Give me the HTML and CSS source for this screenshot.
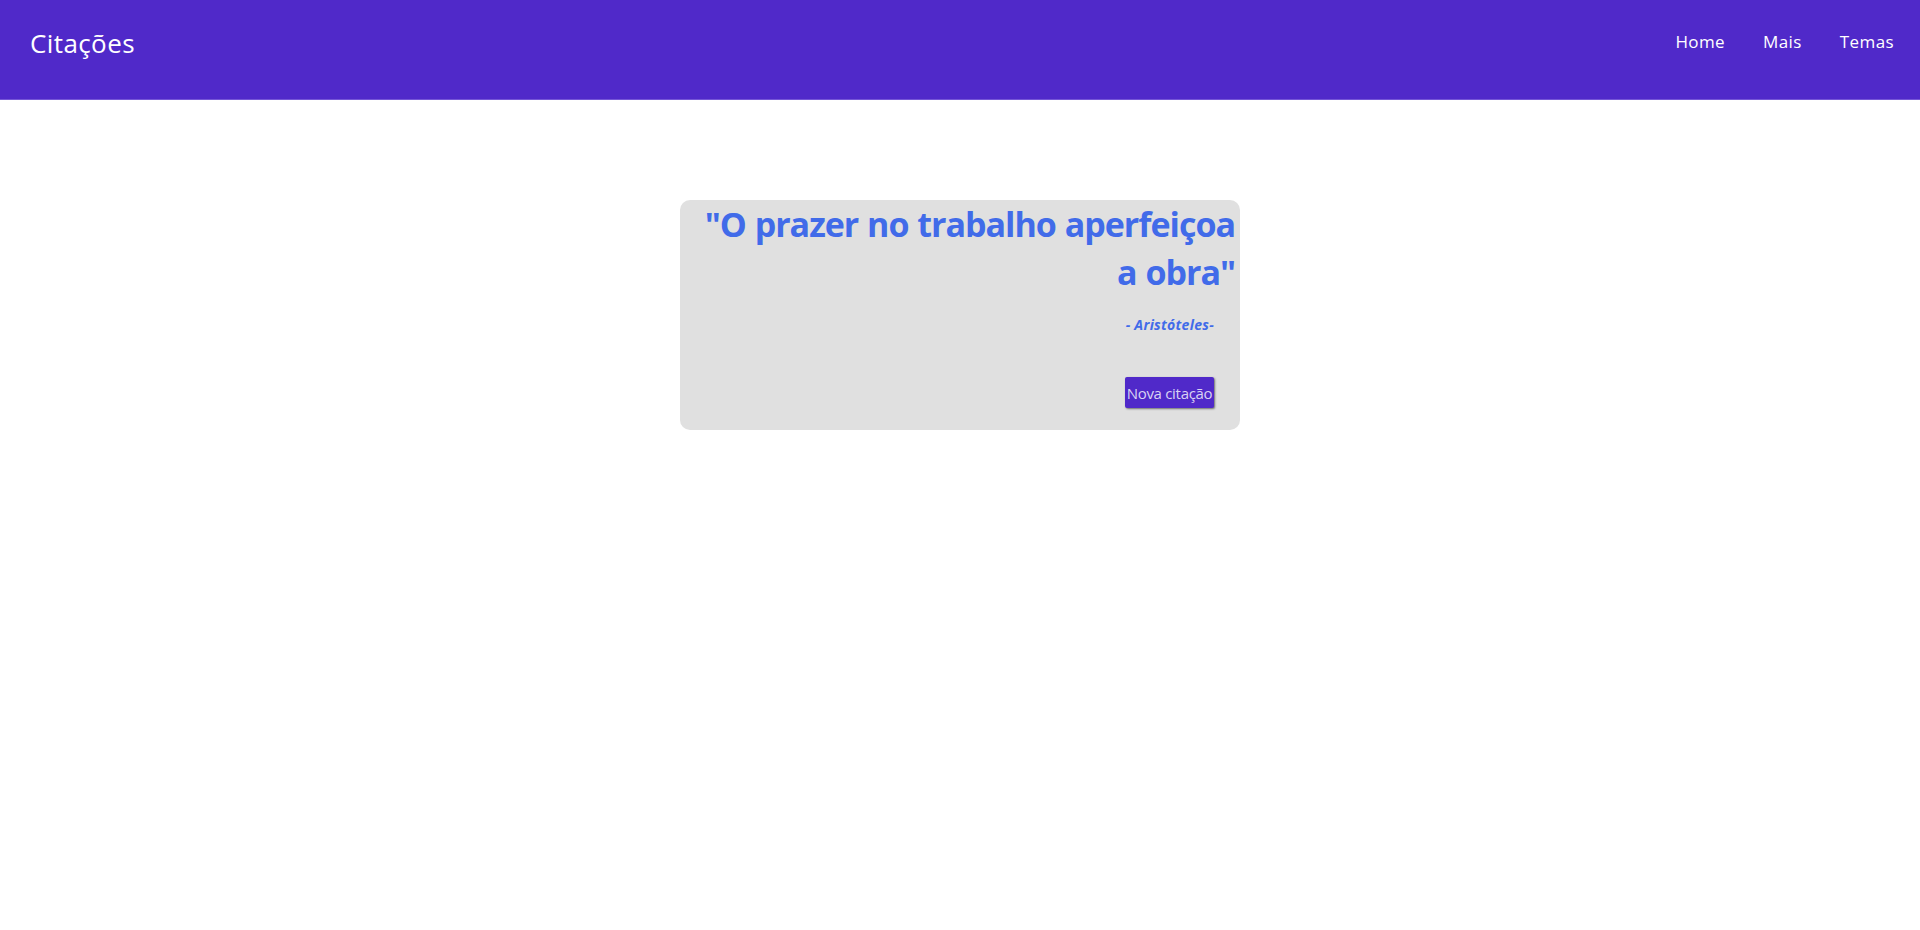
FILE: index.html
```html
<!DOCTYPE html>
<html lang="pt-BR">
<head>
<meta charset="utf-8">
<title>Citações</title>
<link rel="stylesheet" href="styles.css">
</head>
<body>
<header class="topbar">
  <div class="brand">Citações</div>
  <nav class="menu">
    <a href="#" class="menu-link">Home</a>
    <a href="#" class="menu-link">Mais</a>
    <a href="#" class="menu-link">Temas</a>
  </nav>
</header>
<main class="content">
  <section class="card">
    <h1 class="quote">"O prazer no trabalho aperfeiçoa a obra"</h1>
    <p class="author">- Aristóteles-</p>
    <div class="actions">
      <button class="new-btn">Nova citação</button>
    </div>
  </section>
</main>
</body>
</html>
```

FILE: styles.css
```css
* { box-sizing: border-box; }
html, body {
  margin: 0;
  padding: 0;
  background: #ffffff;
  font-family: "Open Sans", "Noto Sans", sans-serif;
}
.topbar {
  height: 100px;
  background: #5029c9;
  border-bottom: 1px solid #7556d6;
  display: flex;
  justify-content: space-between;
  align-items: flex-start;
  padding: 0 26px 0 30px;
  color: #ffffff;
}
.brand {
  font-size: 26px;
  font-weight: 400;
  line-height: 30px;
  margin-top: 28px;
  letter-spacing: 0.4px;
}
.menu {
  display: flex;
  gap: 38px;
  margin-top: 31px;
}
.menu-link {
  color: #ffffff;
  text-decoration: none;
  font-size: 17px;
  line-height: 22px;
  letter-spacing: 0.4px;
}
.content {
  display: flex;
  justify-content: center;
  padding-top: 100px;
}
.card {
  width: 560px;
  height: 230px;
  background: #e0e0e0;
  border-radius: 10px;
  padding: 0 5px 0 0;
  display: flex;
  flex-direction: column;
  align-items: flex-end;
}
.quote {
  margin: 0;
  width: 555px;
  text-align: right;
  font-size: 34px;
  line-height: 48px;
  font-weight: 700;
  color: #416be9;
  letter-spacing: -1px;
  word-spacing: 1px;
}
.author {
  margin: 20px 21px 0 0;
  font-size: 14px;
  line-height: 18px;
  font-style: italic;
  font-weight: 700;
  color: #416be9;
  letter-spacing: 0.3px;
}
.actions {
  margin: 43px 21px 0 0;
}
.new-btn {
  background: #5029c9;
  color: #d9d2f3;
  border: none;
  border-radius: 2px;
  font-family: "Open Sans", "Noto Sans", sans-serif;
  font-size: 15px;
  height: 31px;
  width: 89px;
  padding: 0;
  box-shadow: 1px 1px 2px rgba(0,0,0,0.5);
  letter-spacing: -0.3px;
  white-space: nowrap;
}
```
